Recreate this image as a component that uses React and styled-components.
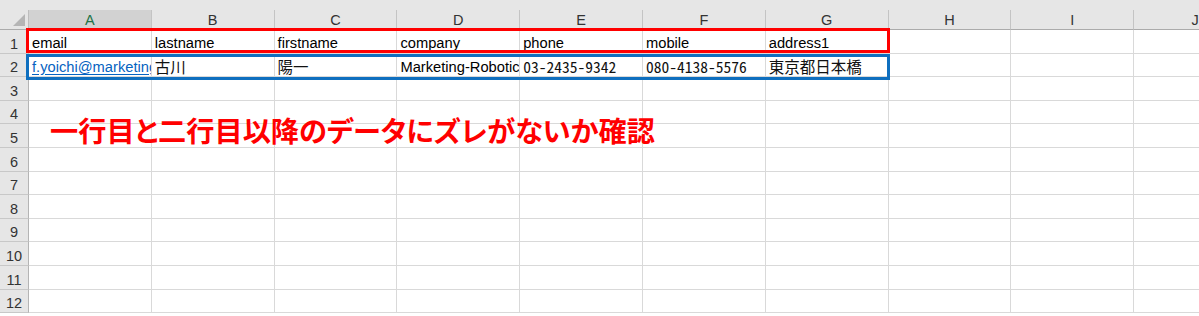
import React from "react";
import styled, { createGlobalStyle } from "styled-components";

const GlobalStyle = createGlobalStyle`
  html, body {
    margin: 0;
    padding: 0;
    background: #ffffff;
    overflow: hidden;
  }
`;

const COL_W = 122.8;
const ROW_H = 23.6;
const LETTERS = ["A", "B", "C", "D", "E", "F", "G", "H", "I", "J"];

const Window = styled.div`
  position: relative;
  width: 1199px;
  height: 316px;
  overflow: hidden;
  background: #ffffff;
  font-family: "Liberation Sans", Arial, sans-serif;
`;

const TopStrip = styled.div`
  height: 10px;
  background: #e6e6e6;
`;

const Sheet = styled.div`
  display: grid;
  grid-template-columns: 29px repeat(10, ${COL_W}px);
  grid-template-rows: 20px repeat(12, ${ROW_H}px);
`;

const Corner = styled.div`
  position: relative;
  background: #e6e6e6;
  border-right: 1px solid #bdbdbd;
  border-bottom: 1px solid #ababab;
  box-sizing: border-box;

  &::after {
    content: "";
    position: absolute;
    right: 3px;
    bottom: 3px;
    width: 0;
    height: 0;
    border-left: 12px solid transparent;
    border-bottom: 12px solid #b5b5b5;
  }
`;

const ColHeader = styled.div`
  display: flex;
  align-items: center;
  justify-content: center;
  box-sizing: border-box;
  background: ${(p) => (p.$selected ? "#d2d2d2" : "#e6e6e6")};
  color: ${(p) => (p.$selected ? "#217346" : "#333333")};
  border-right: 1px solid #c4c4c4;
  border-bottom: 1px solid #ababab;
  font-size: 14.5px;
  padding-top: 1px;
`;

const RowHeader = styled.div`
  display: flex;
  align-items: flex-end;
  justify-content: center;
  box-sizing: border-box;
  background: #e6e6e6;
  color: #333333;
  border-right: 1px solid #b4b4b4;
  border-bottom: 1px solid #c8c8c8;
  font-size: 14.5px;
  padding-bottom: 1px;
`;

const Cell = styled.div`
  display: flex;
  align-items: flex-end;
  box-sizing: border-box;
  border-right: 1px solid #d9d9d9;
  border-bottom: 1px solid #d9d9d9;
  padding: 0 0 1.5px 3px;
  overflow: hidden;
  white-space: nowrap;
  font-size: 14.7px;
  line-height: 16px;
  color: #000000;
`;

const Link = styled.span`
  color: #0563c1;
  text-decoration: underline;
  text-underline-offset: 2px;
`;

const Jp = styled.span`
  font-family: "Noto Sans CJK JP", sans-serif;
  font-size: 15.5px;
  line-height: 17px;
  color: #111111;
`;

const Phone = styled.span`
  font-family: "Noto Sans CJK JP", sans-serif;
  font-size: 15.5px;
  line-height: 17px;
  font-feature-settings: "hwid";
  color: #111111;
`;

const Frame = styled.div`
  position: absolute;
  left: 26px;
  top: ${(p) => p.$top}px;
  width: 864px;
  height: ${(p) => p.$height}px;
  border: 3px solid ${(p) => p.$color};
  box-sizing: border-box;
  pointer-events: none;
`;

const Callout = styled.div`
  position: absolute;
  left: 50px;
  top: 113px;
  font-family: "Noto Sans CJK JP", sans-serif;
  font-weight: 700;
  font-size: 28.2px;
  line-height: 34px;
  font-feature-settings: "palt";
  color: #ff0000;
  white-space: nowrap;
`;

const rows = [
  [
    "email",
    "lastname",
    "firstname",
    "company",
    "phone",
    "mobile",
    "address1",
  ],
  [
    <Link key="a">f.yoichi@marketing-robotics.co.jp</Link>,
    <Jp key="b">古川</Jp>,
    <Jp key="c">陽一</Jp>,
    "Marketing-Robotics",
    <Phone key="e">03-2435-9342</Phone>,
    <Phone key="f">080-4138-5576</Phone>,
    <Jp key="g">東京都日本橋</Jp>,
  ],
];

export default function App() {
  const body = [];
  for (let r = 0; r < 12; r++) {
    body.push(<RowHeader key={`h${r}`}>{r + 1}</RowHeader>);
    for (let c = 0; c < 10; c++) {
      const value = rows[r] ? rows[r][c] : null;
      body.push(<Cell key={`${r}-${c}`}>{value}</Cell>);
    }
  }

  return (
    <Window>
      <GlobalStyle />
      <TopStrip />
      <Sheet>
        <Corner />
        {LETTERS.map((l, i) => (
          <ColHeader key={l} $selected={i === 0}>
            {l}
          </ColHeader>
        ))}
        {body}
      </Sheet>
      <Frame $top={28} $height={25} $color="#ff0000" />
      <Frame $top={54} $height={26} $color="#0f6fbf" />
      <Callout>一行目と二行目以降のデータにズレがないか確認</Callout>
    </Window>
  );
}
